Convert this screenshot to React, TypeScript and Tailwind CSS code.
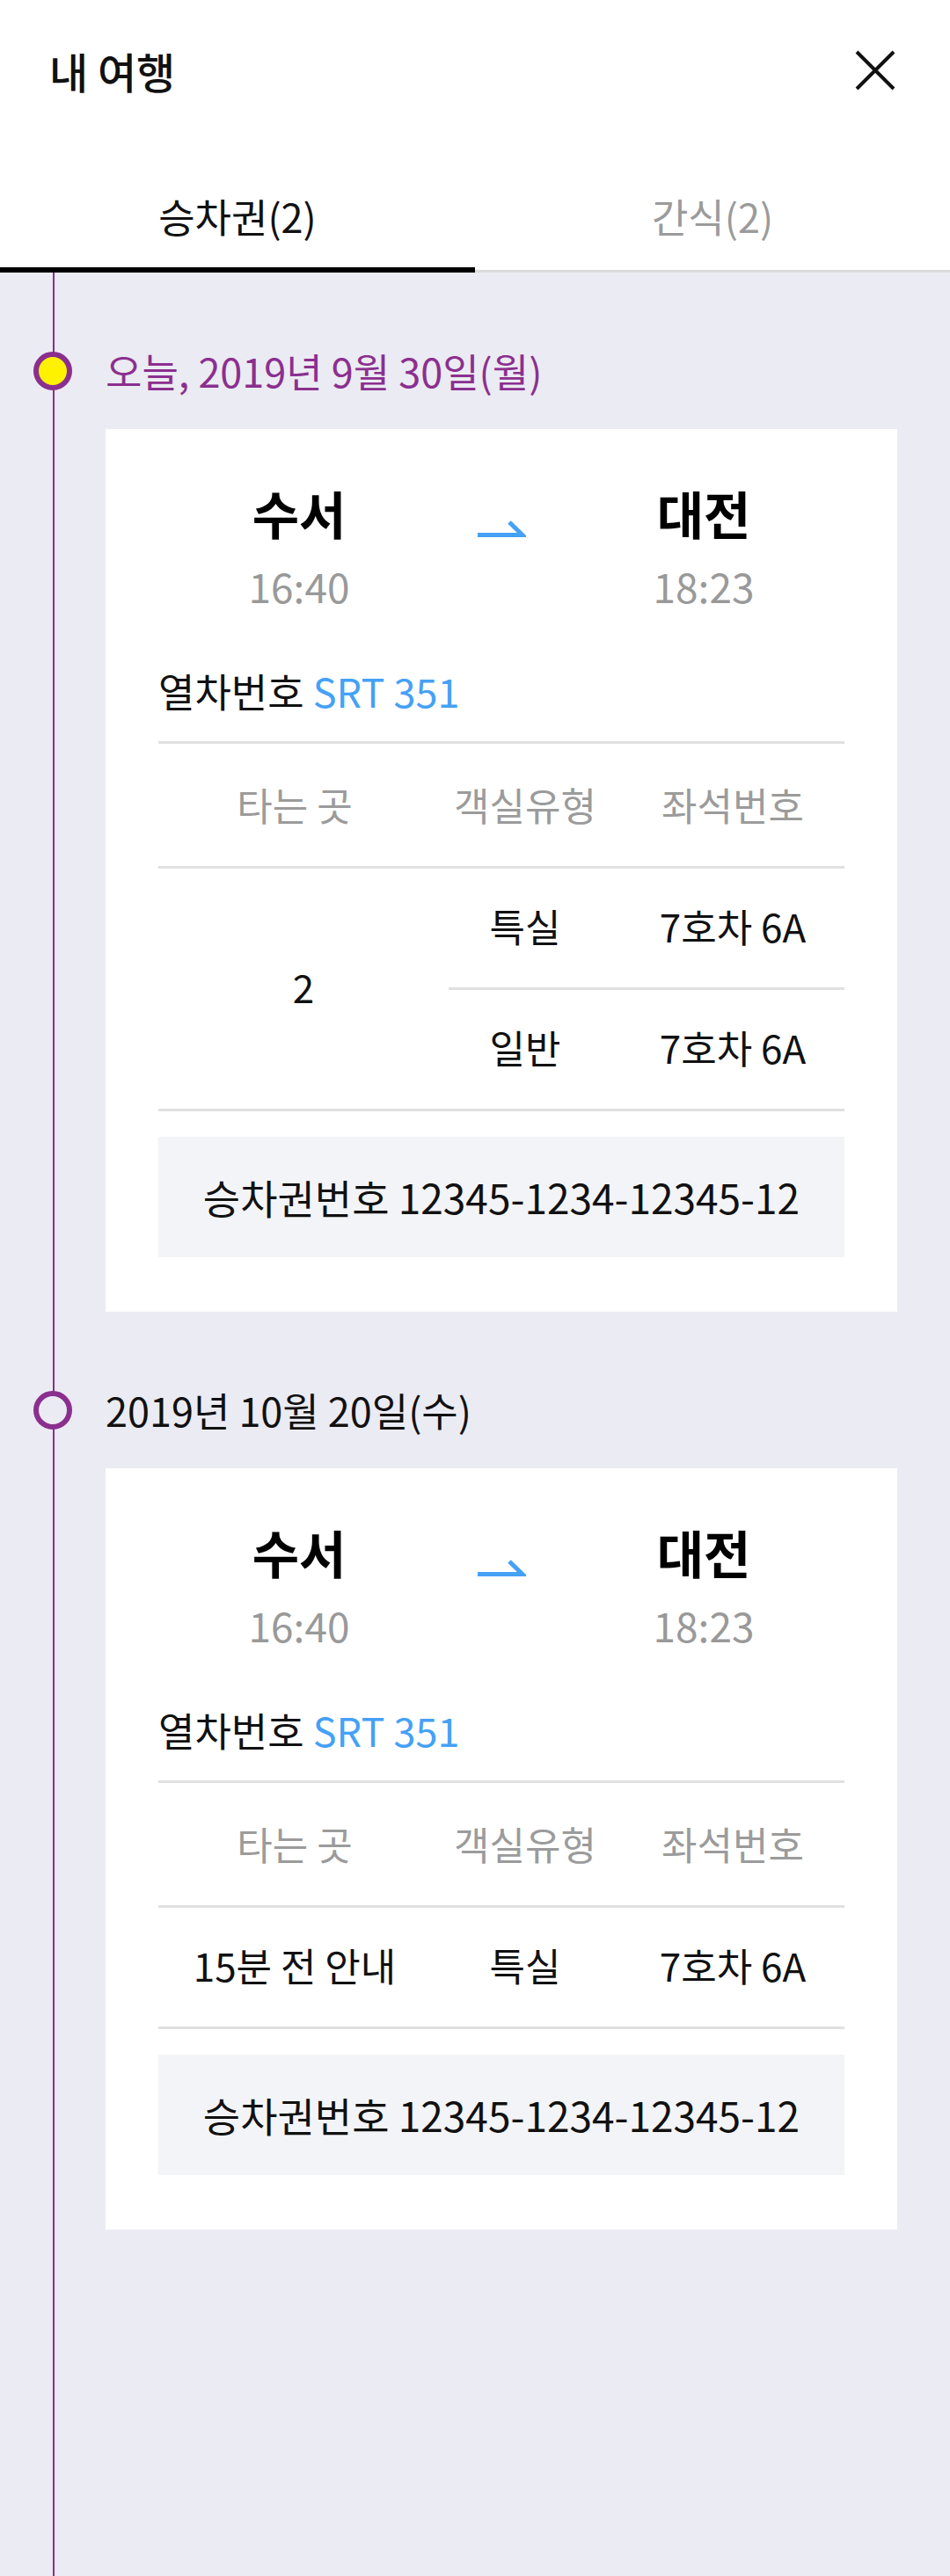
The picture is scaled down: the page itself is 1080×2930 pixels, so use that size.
/**
 * MyTrips — "내 여행" screen: tab header + timeline of ticket cards.
 */
import React from 'react';

type SeatRow = { cls: string; seat: string };
type Trip = {
  id: number;
  date: string;
  today?: boolean;
  from: string;
  to: string;
  dep: string;
  arr: string;
  train: string;
  boarding: string;
  seats: SeatRow[];
  ticketNo: string;
};

const TRIPS: Trip[] = [
  {
    id: 1,
    date: '오늘, 2019년 9월 30일(월)',
    today: true,
    from: '수서',
    to: '대전',
    dep: '16:40',
    arr: '18:23',
    train: 'SRT 351',
    boarding: '2',
    seats: [
      { cls: '특실', seat: '7호차 6A' },
      { cls: '일반', seat: '7호차 6A' },
    ],
    ticketNo: '12345-1234-12345-12',
  },
  {
    id: 2,
    date: '2019년 10월 20일(수)',
    from: '수서',
    to: '대전',
    dep: '16:40',
    arr: '18:23',
    train: 'SRT 351',
    boarding: '15분 전 안내',
    seats: [{ cls: '특실', seat: '7호차 6A' }],
    ticketNo: '12345-1234-12345-12',
  },
];

const divider = 'h-[3px] bg-[#e0e0e0]';

function CloseIcon() {
  return (
    <svg width="46" height="46" viewBox="0 0 46 46" fill="none">
      <path d="M2 2L44 44M44 2L2 44" stroke="#111" strokeWidth="4" />
    </svg>
  );
}

function RouteArrow() {
  return (
    <svg width="56" height="20" viewBox="0 0 56 20" fill="none">
      <path d="M1 16.5H52L37 2" stroke="#45a1f6" strokeWidth="5" strokeLinejoin="miter" />
    </svg>
  );
}

function Tab({ label, active }: { label: string; active?: boolean }) {
  return (
    <div className="flex-1 flex flex-col">
      <div
        className={`h-[144px] pt-[28px] flex items-center justify-center text-[45px] ${
          active ? 'text-[#111]' : 'text-[#9b9b9b]'
        }`}
      >
        {label}
      </div>
      {active ? (
        <div className="h-[6px] bg-black" />
      ) : (
        <div className="h-[6px] flex flex-col justify-end">
          <div className="h-[3px] bg-[#dcdcdc]" />
        </div>
      )}
    </div>
  );
}

function TicketCard({ trip }: { trip: Trip }) {
  // a boarding cell spanning several seat rows sits a little further right
  const spans = trip.seats.length > 1;
  return (
    <div className="ml-[120px] mr-[60px] mt-[34px] bg-white px-[60px] pt-[59px] pb-[62px]">
      {/* Route */}
      <div className="grid grid-cols-[160px_300px_160px] justify-center">
        <div className="flex flex-col items-center">
          <span className="text-[58px] leading-[72px] font-bold text-black">{trip.from}</span>
          <span className="mt-[19px] text-[46px] leading-[56px] text-[#999]">{trip.dep}</span>
        </div>
        <div className="flex justify-center pt-[45px]">
          <div className="h-[20px]">
            <RouteArrow />
          </div>
        </div>
        <div className="flex flex-col items-center">
          <span className="text-[58px] leading-[72px] font-bold text-black">{trip.to}</span>
          <span className="mt-[19px] text-[46px] leading-[56px] text-[#999]">{trip.arr}</span>
        </div>
      </div>

      {/* Train number */}
      <p className="mt-[64px] text-[45px] leading-[56px] text-[#111]">
        열차번호 <span className="text-[#45a1f6]">{trip.train}</span>
      </p>

      {/* Seat table */}
      <div className={`mt-[29px] ${divider}`} />
      <div className="h-[139px] pb-[2px] flex items-center text-[44px] text-[#9b9b9b]">
        <span className="w-[330px] pr-[20px] text-center">타는 곳</span>
        <span className="w-[174px] text-center">객실유형</span>
        <span className="flex-1 pl-[22px] text-center">좌석번호</span>
      </div>
      <div className={divider} />
      <div className="flex text-[44px] text-[#111]">
        <div
          className={`w-[330px] pb-[6px] flex items-center justify-center ${spans ? '' : 'pr-[20px]'}`}
        >
          {trip.boarding}
        </div>
        <div className="flex-1 flex flex-col">
          {trip.seats.map((s, i) => (
            <React.Fragment key={i}>
              {i > 0 && <div className={divider} />}
              <div className="h-[135px] pb-[6px] flex items-center">
                <span className="w-[174px] text-center">{s.cls}</span>
                <span className="flex-1 pl-[22px] text-center">{s.seat}</span>
              </div>
            </React.Fragment>
          ))}
        </div>
      </div>
      <div className={divider} />

      {/* Ticket number */}
      <div className="mt-[29px] h-[137px] bg-[#f3f4f7] flex items-center justify-center text-[46px] text-[#111]">
        승차권번호 {trip.ticketNo}
      </div>
    </div>
  );
}

export default function App() {
  return (
    <div className="min-h-screen flex flex-col bg-[#ebebf3] font-['Noto_Sans_CJK_KR','Noto_Sans',sans-serif]">
      {/* Header */}
      <div className="bg-white">
        <div className="h-[160px] flex items-center justify-between pl-[56px] pr-[62px]">
          <h1 className="text-[48px] font-medium text-[#111]">내 여행</h1>
          <CloseIcon />
        </div>
        <div className="flex">
          <Tab label="승차권(2)" active />
          <Tab label="간식(2)" />
        </div>
      </div>

      {/* Timeline */}
      <div className="relative flex-1">
        <div className="absolute left-[60px] top-0 bottom-0 w-[2px] bg-[#8b2f8f]" />
        {TRIPS.map((trip) => (
          <section key={trip.id} className="relative pt-[80px]">
            <div className="h-[64px] flex items-center">
              <div className="w-[120px] flex justify-center">
                <div
                  className={`w-[44px] h-[44px] rounded-full border-[6px] border-[#8b2f8f] ${
                    trip.today ? 'bg-[#fff200]' : 'bg-[#ebebf3]'
                  }`}
                />
              </div>
              <span className={`text-[45px] ${trip.today ? 'text-[#8b2f8f]' : 'text-[#111]'}`}>
                {trip.date}
              </span>
            </div>
            <TicketCard trip={trip} />
          </section>
        ))}
      </div>
    </div>
  );
}
